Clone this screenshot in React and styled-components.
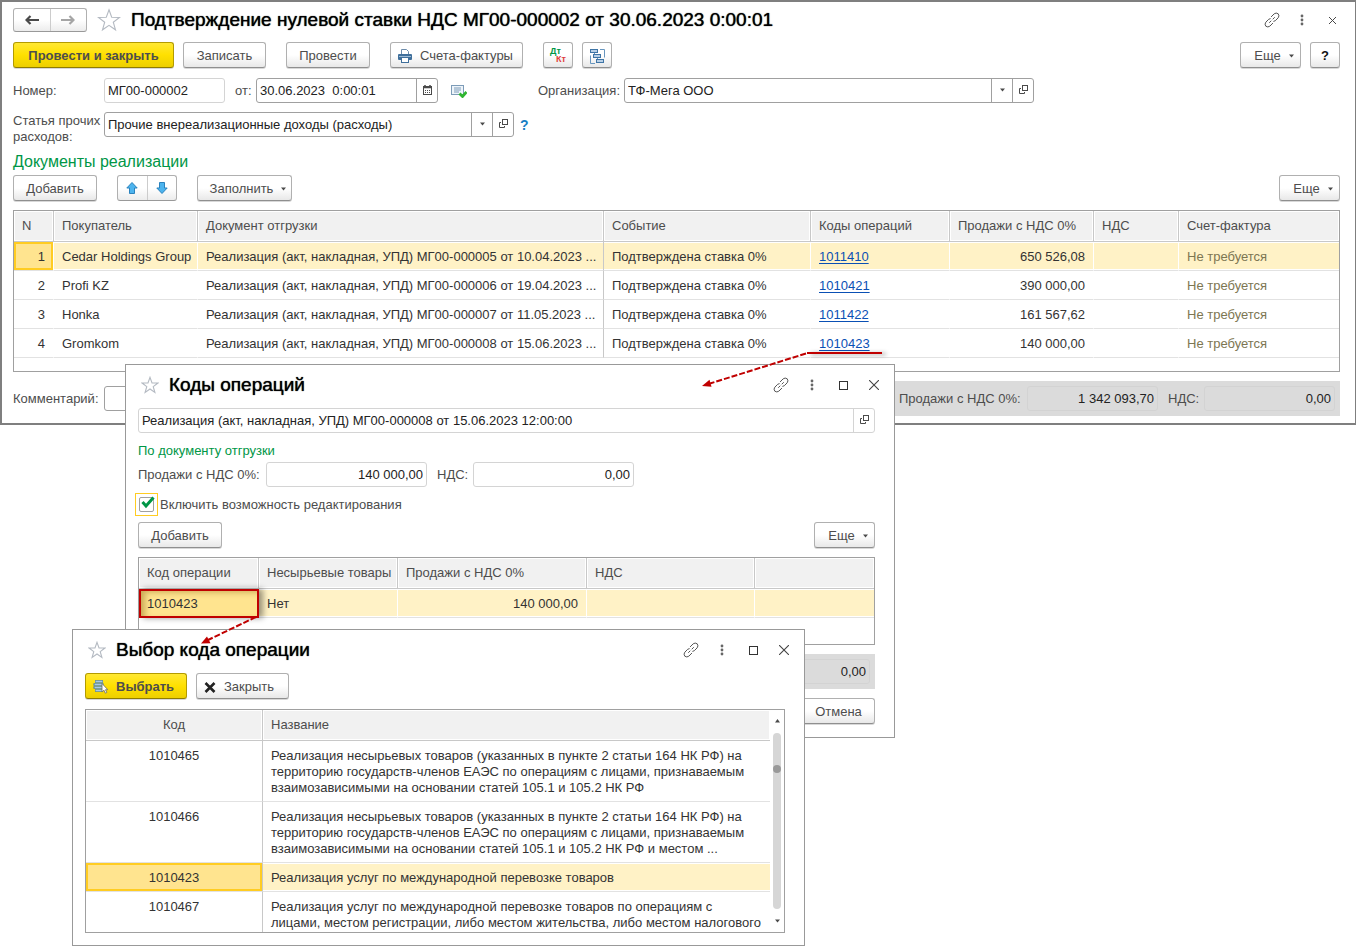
import React, { useState } from "react";
import styled, { createGlobalStyle, css } from "styled-components";

const SALES = [
  { n: 1, buyer: "Cedar Holdings Group", doc: "Реализация (акт, накладная, УПД) МГ00-000005 от 10.04.2023 ...", code: "1011410", sum: "650 526,08" },
  { n: 2, buyer: "Profi KZ", doc: "Реализация (акт, накладная, УПД) МГ00-000006 от 19.04.2023 ...", code: "1010421", sum: "390 000,00" },
  { n: 3, buyer: "Honka", doc: "Реализация (акт, накладная, УПД) МГ00-000007 от 11.05.2023 ...", code: "1011422", sum: "161 567,62" },
  { n: 4, buyer: "Gromkom", doc: "Реализация (акт, накладная, УПД) МГ00-000008 от 15.06.2023 ...", code: "1010423", sum: "140 000,00" },
];

const CODES = [
  {
    code: "1010465",
    name: "Реализация несырьевых товаров (указанных в пункте 2 статьи 164 НК РФ) на\nтерриторию государств-членов ЕАЭС по операциям с лицами, признаваемым\nвзаимозависимыми на основании статей 105.1 и 105.2 НК РФ",
  },
  {
    code: "1010466",
    name: "Реализация несырьевых товаров (указанных в пункте 2 статьи 164 НК РФ) на\nтерриторию государств-членов ЕАЭС по операциям с лицами, признаваемым\nвзаимозависимыми на основании статей 105.1 и 105.2 НК РФ и местом ...",
  },
  { code: "1010423", name: "Реализация услуг по международной перевозке товаров" },
  {
    code: "1010467",
    name: "Реализация услуг по международной перевозке товаров по операциям с\nлицами, местом регистрации, либо местом жительства, либо местом налогового",
  },
];

export default function App() {
  return (
    <>
      <GlobalStyle />
      <Desktop>
        <MainWindow />
        <CodesDialog />
        <PickDialog />
        <Arrows />
      </Desktop>
    </>
  );
}

function MainWindow() {
  const [active, setActive] = useState(1);

  return (
    <Main>
      <TitleBar>
        <NavGroup>
          <NavButton type="button" aria-label="Назад">
            <ArrowIcon color="#4a4a4a" />
          </NavButton>
          <NavButton type="button" aria-label="Вперед">
            <ArrowIcon color="#a5a5a5" flip />
          </NavButton>
        </NavGroup>
        <StarIcon size={24} />
        <Title>Подтверждение нулевой ставки НДС МГ00-000002 от 30.06.2023 0:00:01</Title>
        <WindowTools small />
      </TitleBar>

      <Toolbar>
        <Button type="button" $primary $width={161}>Провести и закрыть</Button>
        <Button type="button" $width={83}>Записать</Button>
        <Button type="button" $width={84} $space={11}>Провести</Button>
        <Button type="button" $withIcon $width={133} $space={11}>
          <PrinterIcon />
          Счета-фактуры
        </Button>
        <Button type="button" $width={30} $space={11} aria-label="Проводки">
          <PostingsIcon />
        </Button>
        <Button type="button" $width={30} aria-label="Структура подчиненности">
          <TreeIcon />
        </Button>
        <Spring />
        <MoreButton />
        <Button type="button" $width={30} $dark>?</Button>
      </Toolbar>

      <FormRow>
        <Label htmlFor="number" $width={91}>Номер:</Label>
        <Field $width={121} $light>
          <Input id="number" defaultValue="МГ00-000002" />
        </Field>
        <Label htmlFor="date" $width={21} $space={10}>от:</Label>
        <Field $width={182}>
          <Input id="date" defaultValue="30.06.2023  0:00:01" />
          <FieldButton type="button" aria-label="Календарь">
            <CalendarIcon />
          </FieldButton>
        </Field>
        <StatusIcon />
        <Label htmlFor="org" $width={86}>Организация:</Label>
        <Field $width={410}>
          <Select id="org">
            <option>ТФ-Мега ООО</option>
          </Select>
          <FieldButton type="button" aria-label="Выбрать организацию">
            <Caret />
          </FieldButton>
          <FieldButton type="button" aria-label="Открыть организацию">
            <OpenIcon />
          </FieldButton>
        </Field>
      </FormRow>

      <ExpenseRow>
        <Label htmlFor="expense" $width={91}>Статья прочих расходов:</Label>
        <Field $width={410}>
          <Select id="expense">
            <option>Прочие внереализационные доходы (расходы)</option>
          </Select>
          <FieldButton type="button" aria-label="Выбрать статью">
            <Caret />
          </FieldButton>
          <FieldButton type="button" aria-label="Открыть статью">
            <OpenIcon />
          </FieldButton>
        </Field>
        <HelpButton type="button">?</HelpButton>
      </ExpenseRow>

      <SectionTitle>Документы реализации</SectionTitle>

      <Toolbar>
        <Button type="button" $width={84}>Добавить</Button>
        <MoveGroup>
          <MoveButton type="button" aria-label="Вверх">
            <MoveIcon />
          </MoveButton>
          <MoveButton type="button" aria-label="Вниз">
            <MoveIcon down />
          </MoveButton>
        </MoveGroup>
        <Button type="button" $menu $width={95} $space={11}>
          Заполнить
          <Caret />
        </Button>
        <Spring />
        <MoreButton />
      </Toolbar>

      <TableFrame $rest={13}>
        <Table>
          <colgroup>
            <Col $width={40} />
            <Col $width={144} />
            <Col $width={406} />
            <Col $width={207} />
            <Col $width={139} />
            <Col $width={144} />
            <Col $width={85} />
            <Col />
          </colgroup>
          <thead>
            <tr>
              <Th>N</Th>
              <Th>Покупатель</Th>
              <Th>Документ отгрузки</Th>
              <Th>Событие</Th>
              <Th>Коды операций</Th>
              <Th>Продажи с НДС 0%</Th>
              <Th>НДС</Th>
              <Th>Счет-фактура</Th>
            </tr>
          </thead>
          <tbody>
            {SALES.map((row) => (
              <Row key={row.n} $active={row.n === active} onClick={() => setActive(row.n)}>
                <Td $align="right" $current={row.n === active}>{row.n}</Td>
                <Td>{row.buyer}</Td>
                <Td $divider>{row.doc}</Td>
                <Td>Подтверждена ставка 0%</Td>
                <Td>
                  <CodeLink href="#codes">{row.code}</CodeLink>
                </Td>
                <Td $align="right">{row.sum}</Td>
                <Td />
                <Td $muted>Не требуется</Td>
              </Row>
            ))}
          </tbody>
        </Table>
      </TableFrame>

      <FooterRow>
        <Label htmlFor="comment" $width={91}>Комментарий:</Label>
        <Field $grow>
          <Input id="comment" />
        </Field>
        <Totals>
          <Label htmlFor="total-sum" $width={128}>Продажи с НДС 0%:</Label>
          <Field $width={131} $total>
            <Input id="total-sum" $right readOnly value="1 342 093,70" />
          </Field>
          <Label htmlFor="total-vat" $width={36} $space={10}>НДС:</Label>
          <Field $width={131} $total>
            <Input id="total-vat" $right readOnly value="0,00" />
          </Field>
        </Totals>
      </FooterRow>
    </Main>
  );
}

function CodesDialog() {
  const [editable, setEditable] = useState(true);

  return (
    <CodesWindow id="codes">
      <DialogTitleBar>
        <StarIcon size={18} />
        <Title>Коды операций</Title>
        <WindowTools />
      </DialogTitleBar>

      <Field $light>
        <Input aria-label="Документ" readOnly value="Реализация (акт, накладная, УПД) МГ00-000008 от 15.06.2023 12:00:00" />
        <FieldButton type="button" $light aria-label="Открыть документ">
          <OpenIcon />
        </FieldButton>
      </Field>

      <GroupTitle>По документу отгрузки</GroupTitle>
      <FormRow $flush>
        <Label htmlFor="doc-sum" $width={128}>Продажи с НДС 0%:</Label>
        <Field $width={161} $light>
          <Input id="doc-sum" $right readOnly value="140 000,00" />
        </Field>
        <Label htmlFor="doc-vat" $width={36} $space={10}>НДС:</Label>
        <Field $width={161} $light>
          <Input id="doc-vat" $right readOnly value="0,00" />
        </Field>
      </FormRow>

      <CheckLabel>
        <CheckFrame>
          <Checkbox type="checkbox" checked={editable} onChange={(e) => setEditable(e.target.checked)} />
          {editable && <TickIcon />}
        </CheckFrame>
        Включить возможность редактирования
      </CheckLabel>

      <Toolbar>
        <Button type="button" $width={84}>Добавить</Button>
        <Spring />
        <MoreButton />
      </Toolbar>

      <TableFrame $rest={26}>
        <Table>
          <colgroup>
            <Col $width={120} />
            <Col $width={139} />
            <Col $width={189} />
            <Col $width={168} />
            <Col />
          </colgroup>
          <thead>
            <tr>
              <Th>Код операции</Th>
              <Th>Несырьевые товары</Th>
              <Th>Продажи с НДС 0%</Th>
              <Th>НДС</Th>
              <Th />
            </tr>
          </thead>
          <tbody>
            <Row $active>
              <Td $marked>1010423</Td>
              <Td>Нет</Td>
              <Td $align="right">140 000,00</Td>
              <Td />
              <Td />
            </Row>
          </tbody>
        </Table>
      </TableFrame>

      <DialogTotals>
        <Field $width={131} $total>
          <Input aria-label="НДС" $right readOnly value="0,00" />
        </Field>
      </DialogTotals>

      <DialogActions>
        <Button type="button" $width={73}>Отмена</Button>
      </DialogActions>
    </CodesWindow>
  );
}

function PickDialog() {
  const [picked, setPicked] = useState("1010423");

  return (
    <PickWindow>
      <DialogTitleBar>
        <StarIcon size={18} />
        <Title>Выбор кода операции</Title>
        <WindowTools />
      </DialogTitleBar>

      <Toolbar $below={10}>
        <Button type="button" $primary $withIcon $width={102}>
          <PickIcon />
          Выбрать
        </Button>
        <Button type="button" $withIcon $width={93}>
          <CrossIcon />
          Закрыть
        </Button>
      </Toolbar>

      <ListFrame>
        <ListBody>
          <Table>
            <colgroup>
              <Col $width={177} />
              <Col />
            </colgroup>
            <thead>
              <tr>
                <Th $align="center">Код</Th>
                <Th>Название</Th>
              </tr>
            </thead>
            <tbody>
              {CODES.map((row) => (
                <Row key={row.code} $active={row.code === picked} onClick={() => setPicked(row.code)}>
                  <Td $align="center" $divider $current={row.code === picked}>{row.code}</Td>
                  <Td>{row.name}</Td>
                </Row>
              ))}
            </tbody>
          </Table>
        </ListBody>
        <ScrollBar>
          <Caret up />
          <Track>
            <Thumb />
          </Track>
          <Caret />
        </ScrollBar>
      </ListFrame>
    </PickWindow>
  );
}

function MoreButton() {
  return (
    <Button type="button" $menu $width={61}>
      Еще
      <Caret />
    </Button>
  );
}

function WindowTools({ small }) {
  return (
    <Tools $small={small}>
      <ToolButton type="button" aria-label="Ссылка">
        <svg width="16" height="16" viewBox="0 0 16 16" fill="none" stroke="#555" strokeLinecap="round">
          <path d="M7.300 4.700 10.200 1.800Q12.200.3 14.200 1.800 15.700 3.800 14.200 5.800L11.300 8.700 9.800 9.300" />
          <path d="M8.700 11.300 5.800 14.200Q3.800 15.700 1.800 14.200.3 12.200 1.800 10.200L4.700 7.300 6.200 6.700" />
          <path d="M5.500 10.500 7 9M9 7 10.500 5.500" />
        </svg>
      </ToolButton>
      <ToolButton type="button" aria-label="Меню">
        <svg width="4" height="12" viewBox="0 0 4 12" fill="#666">
          <circle cx="2" cy="2" r="1.4" />
          <circle cx="2" cy="6" r="1.4" />
          <circle cx="2" cy="10" r="1.4" />
        </svg>
      </ToolButton>
      {!small && (
        <ToolButton type="button" aria-label="Развернуть">
          <svg width="9" height="9" viewBox="0 0 9 9" fill="none" stroke="#333">
            <rect x=".5" y=".5" width="8" height="8" />
          </svg>
        </ToolButton>
      )}
      <ToolButton type="button" aria-label="Закрыть">
        <svg width={small ? 7 : 10} height={small ? 7 : 10} viewBox="0 0 10 10" stroke="#444" strokeWidth={small ? 1.4 : 1.1}>
          <path d="M0 0 10 10M10 0 0 10" />
        </svg>
      </ToolButton>
    </Tools>
  );
}

function ArrowIcon({ color, flip }) {
  return (
    <svg width="14" height="10" viewBox="0 0 14 10">
      <path
        d={flip ? "M0 5h12M8.5 1 12.5 5 8.5 9" : "M14 5H2M5.5 1 1.5 5 5.5 9"}
        fill="none"
        stroke={color}
        strokeWidth="2.2"
      />
    </svg>
  );
}

function StarIcon({ size }) {
  return (
    <svg width={size} height={size} viewBox="0 0 24 24" fill="#fff" stroke="#b4bac2" strokeWidth={size > 20 ? 1.1 : 1.5}>
      <path d="M12 1.8 14.7 9.2 22.5 9.4 16.3 14.2 18.5 21.8 12 17.3 5.5 21.8 7.7 14.2 1.5 9.4 9.3 9.2Z" />
    </svg>
  );
}

function PrinterIcon() {
  return (
    <svg width="14" height="14" viewBox="0 0 14 14">
      <path d="M3.5 6V.5h5l2 2V6" fill="#fff" stroke="#6d8cab" />
      <rect x="0" y="5" width="14" height="6" rx="1" fill="#3f6f9b" />
      <path d="M1 7.5h12" stroke="#9dbbd6" />
      <rect x="3.5" y="8.5" width="7" height="5" fill="#fff" stroke="#3f6f9b" />
    </svg>
  );
}

function PostingsIcon() {
  return (
    <PostingsGlyph>
      <Debit>Дт</Debit>
      <Credit>Кт</Credit>
    </PostingsGlyph>
  );
}

function TreeIcon() {
  return (
    <svg width="15" height="15" viewBox="0 0 15 15" fill="#b9d0e6" stroke="#3f75a6">
      <path d="M10 .5h4.500v8M5 14.500H.5v-8M4.500 4v1.500M7.500 9v1.500" fill="none" stroke="#6796bf" />
      <rect x=".5" y=".5" width="7" height="3" />
      <rect x="3.500" y="5.500" width="7" height="3" />
      <rect x="6.500" y="10.500" width="7" height="3" />
    </svg>
  );
}

function CalendarIcon() {
  return (
    <svg width="9" height="10" viewBox="0 0 9 10">
      <rect x=".5" y="1.5" width="8" height="8" fill="#fff" stroke="#4a4a4a" />
      <path d="M0 2.500h9M2 0v3M7 0v3" stroke="#4a4a4a" strokeWidth="1.500" />
      <path d="M2 5.500h5M2 7.500h5" stroke="#4a4a4a" strokeDasharray="1 1" />
    </svg>
  );
}

function OpenIcon() {
  return (
    <svg width="9" height="9" viewBox="0 0 9 9" fill="none" stroke="#4a4a4a">
      <rect x="3.5" y=".5" width="5" height="5" />
      <path d="M2 3.500H.5v5h5V7" />
    </svg>
  );
}

function StatusIcon() {
  return (
    <StatusSvg width="16" height="13" viewBox="0 0 16 13">
      <rect x=".5" y=".5" width="12" height="9" fill="#eef4fa" stroke="#7d9cb8" />
      <path d="M3 3h7M3 5h7M3 7h5" stroke="#7d9cb8" />
      <path d="m8.500 8.500 3 3 4-4.500" fill="none" stroke="#2fb52f" strokeWidth="2.800" />
    </StatusSvg>
  );
}

function MoveIcon({ down }) {
  return (
    <svg width="12" height="12" viewBox="0 0 12 12">
      <path
        d={down ? "M6 11.500.8 6h2.700V.5h5V6h2.700Z" : "M6 .5.8 6h2.700v5.500h5V6h2.700Z"}
        fill="#4db4ee"
        stroke="#2b82bd"
      />
    </svg>
  );
}

function Caret({ up }) {
  return (
    <svg width="5" height="4" viewBox="0 0 5 4" fill="#4a4a4a">
      <path d={up ? "M0 3.500h5L2.500 0Z" : "M0 .5h5L2.500 3.500Z"} />
    </svg>
  );
}

function PickIcon() {
  return (
    <svg width="15" height="14" viewBox="0 0 15 14">
      <path d="M2 1.500h8M.5 4.500h10M.5 7.500h10M2 10.500h8" stroke="#3f75a6" strokeWidth="2.600" />
      <path d="M2.500 1.500h7M1.500 4.500h8M1.500 7.500h8M2.500 10.500h7" stroke="#a8c9e8" strokeWidth="1.400" />
      <path d="M9 3.500v8.500l2-1.800 1.300 3 1.500-.7-1.300-2.800h2.300Z" fill="#fff" stroke="#6a6a6a" strokeWidth=".8" />
    </svg>
  );
}

function CrossIcon() {
  return (
    <svg width="12" height="11" viewBox="0 0 12 11">
      <path d="M1.500 1 10.500 10M10.500 1 1.500 10" stroke="#222" strokeWidth="2.600" />
    </svg>
  );
}

function TickIcon() {
  return (
    <TickSvg width="14" height="13" viewBox="0 0 14 13">
      <path d="M1.500 6 5 10 12.500 1.500" fill="none" stroke="#009646" strokeWidth="3" />
    </TickSvg>
  );
}

// Callouts that run across the windows
function Arrows() {
  return (
    <ArrowLayer width="900" height="660" viewBox="0 0 900 660">
      <defs>
        <filter id="soft" x="-10%" y="-300%" width="120%" height="900%">
          <feDropShadow dx="4" dy="1" stdDeviation="2" floodColor="#000" floodOpacity=".4" />
        </filter>
      </defs>
      <rect x="807" y="352" width="75" height="2" fill="#c00000" filter="url(#soft)" />
      <g stroke="#c00000" strokeWidth="2" strokeDasharray="6 2">
        <path d="M806 353.500 710 383.500" />
        <path d="M256 617 208 640" />
      </g>
      <g fill="#c00000">
        <path d="M702 386 709.500 379.800 711.500 386.800Z" />
        <path d="M201 643.500 207 636.500 210.500 643.200Z" />
      </g>
    </ArrowLayer>
  );
}

const GlobalStyle = createGlobalStyle`
  * {
    box-sizing: border-box;
  }
  body {
    margin: 0;
    background: #fff;
    color: #333;
    font-family: "Liberation Sans", Arial, sans-serif;
    font-size: 13px;
    line-height: 16px;
  }
  button, input, select {
    margin: 0;
    font: inherit;
  }
  svg {
    flex: none;
  }
`;

const Desktop = styled.div`
  position: relative;
  min-height: 100vh;
`;

const Main = styled.main`
  padding: 6px 15px 7px 11px;
  border: 2px solid #7f7f7f;
  border-right-width: 1px;
`;

const Dialog = styled.section`
  position: absolute;
  border: 1px solid #999;
  background: #fff;
  padding: 0 19px 0 12px;
`;

const CodesWindow = styled(Dialog)`
  left: 125px;
  top: 364px;
  width: 770px;
  padding-bottom: 13px;
`;

const PickWindow = styled(Dialog)`
  left: 72px;
  top: 629px;
  width: 733px;
  padding-bottom: 12px;
`;

const TitleBar = styled.header`
  display: flex;
  align-items: center;
  gap: 10px;
  height: 24px;
  margin-bottom: 10px;
`;

const DialogTitleBar = styled(TitleBar)`
  height: 40px;
  margin: 0 0 3px;
  padding-left: 3px;
`;

const Title = styled.h1`
  flex: 1;
  margin: 0;
  color: #000;
  font-size: 19px;
  font-weight: 400;
  line-height: 24px;
  text-shadow: 0 0 1px #000;
  white-space: nowrap;
`;

const Tools = styled.div`
  display: flex;
  gap: ${(p) => (p.$small ? 10 : 11)}px;
  margin-right: ${(p) => (p.$small ? -2 : -9)}px;
`;

const ToolButton = styled.button`
  display: flex;
  align-items: center;
  justify-content: center;
  width: 20px;
  height: 20px;
  padding: 0;
  border: 0;
  background: none;
`;

const NavGroup = styled.div`
  display: flex;
  width: 74px;
  height: 24px;
  border: 1px solid #b0b0b0;
  border-bottom-color: #999;
  border-radius: 3px;
  background: linear-gradient(#fff 50%, #ececec);
`;

const NavButton = styled.button`
  display: flex;
  flex: 1;
  align-items: center;
  justify-content: center;
  padding: 0;
  border: 0;
  background: none;

  & + & {
    border-left: 1px solid #ccc;
  }
`;

const Toolbar = styled.div`
  display: flex;
  gap: 9px;
  margin-bottom: ${(p) => p.$below || 9}px;
`;

const Button = styled.button`
  display: flex;
  align-items: center;
  justify-content: center;
  gap: 8px;
  width: ${(p) => p.$width}px;
  height: 26px;
  margin-left: ${(p) => p.$space || 0}px;
  padding: 2px 0 0;
  border: 1px solid #b0b0b0;
  border-bottom-color: #8f8f8f;
  border-radius: 3px;
  background: linear-gradient(#fff 50%, #e8e8e8);
  box-shadow: 0 1px 0 #d8d8d8;
  color: ${(p) => (p.$dark ? "#111" : "#4d4d4d")};
  font-weight: ${(p) => (p.$dark ? 700 : 400)};
  white-space: nowrap;

  ${(p) =>
    p.$menu &&
    css`
      padding-left: 7px;
    `}

  ${(p) =>
    p.$withIcon &&
    css`
      justify-content: flex-start;
      padding-left: 7px;
    `}

  ${(p) =>
    p.$primary &&
    css`
      border-color: #b39b00;
      border-bottom-color: #8f7c00;
      background: linear-gradient(#ffe833, #ffe000 50%, #edcf00);
      font-weight: 700;
    `}
`;

const MoveGroup = styled(NavGroup)`
  width: 60px;
  height: 26px;
  margin-left: 11px;
`;

const MoveButton = styled(NavButton)``;

const Spring = styled.div`
  flex: 1;
`;

const PostingsGlyph = styled.span`
  display: flex;
  flex-direction: column;
  width: 16px;
  padding-bottom: 2px;
  font-size: 9px;
  font-weight: 700;
  line-height: 8px;
`;

const Debit = styled.span`
  align-self: flex-start;
  color: #009646;
`;

const Credit = styled.span`
  align-self: flex-end;
  color: #e03c3c;
`;

const FormRow = styled.div`
  display: flex;
  align-items: center;
  margin-top: ${(p) => (p.$flush ? 0 : 10)}px;
`;

const ExpenseRow = styled.div`
  display: flex;
  align-items: flex-start;
  margin-top: 9px;

  label {
    padding-top: 1px;
    white-space: normal;
  }
`;

const Label = styled.label`
  flex: none;
  width: ${(p) => p.$width}px;
  margin-left: ${(p) => p.$space || 0}px;
  color: #4d4d4d;
  white-space: nowrap;
`;

const Field = styled.div`
  display: flex;
  height: 25px;
  flex: ${(p) => (p.$grow ? 1 : "0 0 auto")};
  width: ${(p) => (p.$width ? `${p.$width}px` : "auto")};
  border: 1px solid ${(p) => (p.$total ? "#d3d3d3" : p.$light ? "#d4d4d4" : "#a0a0a0")};
  border-radius: 3px;
  background: ${(p) => (p.$total ? "none" : "#fff")};
`;

const Input = styled.input`
  flex: 1;
  min-width: 0;
  padding: 0 3px;
  border: 0;
  outline: 0;
  background: none;
  color: #222;
  text-align: ${(p) => (p.$right ? "right" : "left")};
  white-space: pre;
`;

const Select = styled.select`
  flex: 1;
  min-width: 0;
  padding: 0 3px;
  border: 0;
  outline: 0;
  appearance: none;
  background: none;
  color: #222;
`;

const FieldButton = styled.button`
  display: flex;
  flex: none;
  align-items: center;
  justify-content: center;
  width: 21px;
  padding: 0 0 2px;
  border: 0;
  border-left: 1px solid ${(p) => (p.$light ? "#d4d4d4" : "#a0a0a0")};
  background: none;
`;

const StatusSvg = styled.svg`
  margin: 2px 71px 0 13px;
`;

const HelpButton = styled.button`
  height: 25px;
  margin-left: 6px;
  padding: 0;
  border: 0;
  background: none;
  color: #1a7fc4;
  font-size: 14px;
  font-weight: 700;
`;

const SectionTitle = styled.h2`
  margin: 7px 0 3px;
  color: #009646;
  font-size: 16px;
  font-weight: 400;
  line-height: 20px;
`;

const GroupTitle = styled.h2`
  margin: 10px 0 3px;
  color: #009646;
  font-size: 13px;
  font-weight: 400;
`;

const TableFrame = styled.div`
  padding-bottom: ${(p) => p.$rest}px;
  border: 1px solid #a0a0a0;
`;

const Table = styled.table`
  width: 100%;
  border-spacing: 0;
  table-layout: fixed;
`;

const Col = styled.col`
  width: ${(p) => (p.$width ? `${p.$width}px` : "auto")};
`;

const Th = styled.th`
  height: 31px;
  padding: 0 8px;
  border-right: 1px solid #c8c8c8;
  border-bottom: 1px solid #c8c8c8;
  background: #f1f1f1;
  box-shadow: inset 0 0 0 1px #fff;
  color: #4d4d4d;
  font-weight: 400;
  text-align: ${(p) => p.$align || "left"};
  white-space: nowrap;

  &:last-child {
    border-right: 0;
  }
`;

const Td = styled.td`
  height: 29px;
  padding: 7px 8px 5px;
  border-right: 1px solid ${(p) => (p.$divider ? "#c8c8c8" : "#fff")};
  border-bottom: 1px solid #e2e2e2;
  color: ${(p) => (p.$muted ? "#7d7652" : "#333")};
  text-align: ${(p) => p.$align || "left"};
  vertical-align: top;
  white-space: pre;

  &:last-child {
    border-right: 0;
  }

  ${(p) =>
    p.$current &&
    css`
      &&& {
        background: #ffe48f;
        box-shadow: inset 0 0 0 2px #fc2;
      }
    `}

  ${(p) =>
    p.$marked &&
    css`
      &&& {
        position: relative;
        background: #ffe48f;
        outline: 2px solid #c00000;
        outline-offset: -2px;
        box-shadow: 4px 0 6px rgba(0, 0, 0, 0.4), inset 6px 3px 6px rgba(120, 80, 0, 0.4);
      }
    `}
`;

const Row = styled.tr`
  ${(p) =>
    p.$active &&
    css`
      ${Td} {
        background: #fff2c6;
        box-shadow: inset 0 1px 0 #fff, inset 0 -1px 0 #fff;
      }
    `}
`;

const CodeLink = styled.a`
  color: #0a50b4;
  text-underline-offset: 2px;
`;

const FooterRow = styled.div`
  display: flex;
  align-items: center;
  margin-top: 9px;
`;

const Totals = styled.div`
  display: flex;
  align-items: center;
  height: 35px;
  margin-left: 10px;
  padding: 0 5px 0 14px;
  background: #dbdbdb;
`;

const DialogTotals = styled(Totals)`
  justify-content: flex-end;
  margin: 9px 0;
`;

const DialogActions = styled.div`
  display: flex;
  justify-content: flex-end;
`;

const CheckLabel = styled.label`
  display: flex;
  align-items: center;
  gap: 2px;
  margin: 6px 0 6px -3px;
  color: #4d4d4d;
`;

const CheckFrame = styled.span`
  position: relative;
  display: flex;
  align-items: center;
  justify-content: center;
  width: 23px;
  height: 23px;
  border: 1px solid #fc2;
`;

const Checkbox = styled.input`
  width: 15px;
  height: 15px;
  appearance: none;
  border: 1px solid #a0a0a0;
  border-radius: 2px;
`;

const TickSvg = styled.svg`
  position: absolute;
  left: 5px;
  top: 2px;
  pointer-events: none;
`;

const ListFrame = styled.div`
  display: flex;
  height: 224px;
  border: 1px solid #a0a0a0;
`;

const ListBody = styled.div`
  flex: 1;
  min-width: 0;
  overflow: hidden;
`;

const ScrollBar = styled.div`
  display: flex;
  flex-direction: column;
  align-items: center;
  justify-content: space-between;
  width: 14px;
  padding: 9px 0 9px;
`;

const Track = styled.div`
  flex: 1;
  width: 8px;
  margin: 10px 0;
  padding-top: 32px;
  border-radius: 4px;
  background: #d6d6d6;
`;

const Thumb = styled.div`
  width: 8px;
  height: 8px;
  border-radius: 50%;
  background: #999;
`;

const ArrowLayer = styled.svg`
  position: absolute;
  left: 0;
  top: 0;
  pointer-events: none;
`;
